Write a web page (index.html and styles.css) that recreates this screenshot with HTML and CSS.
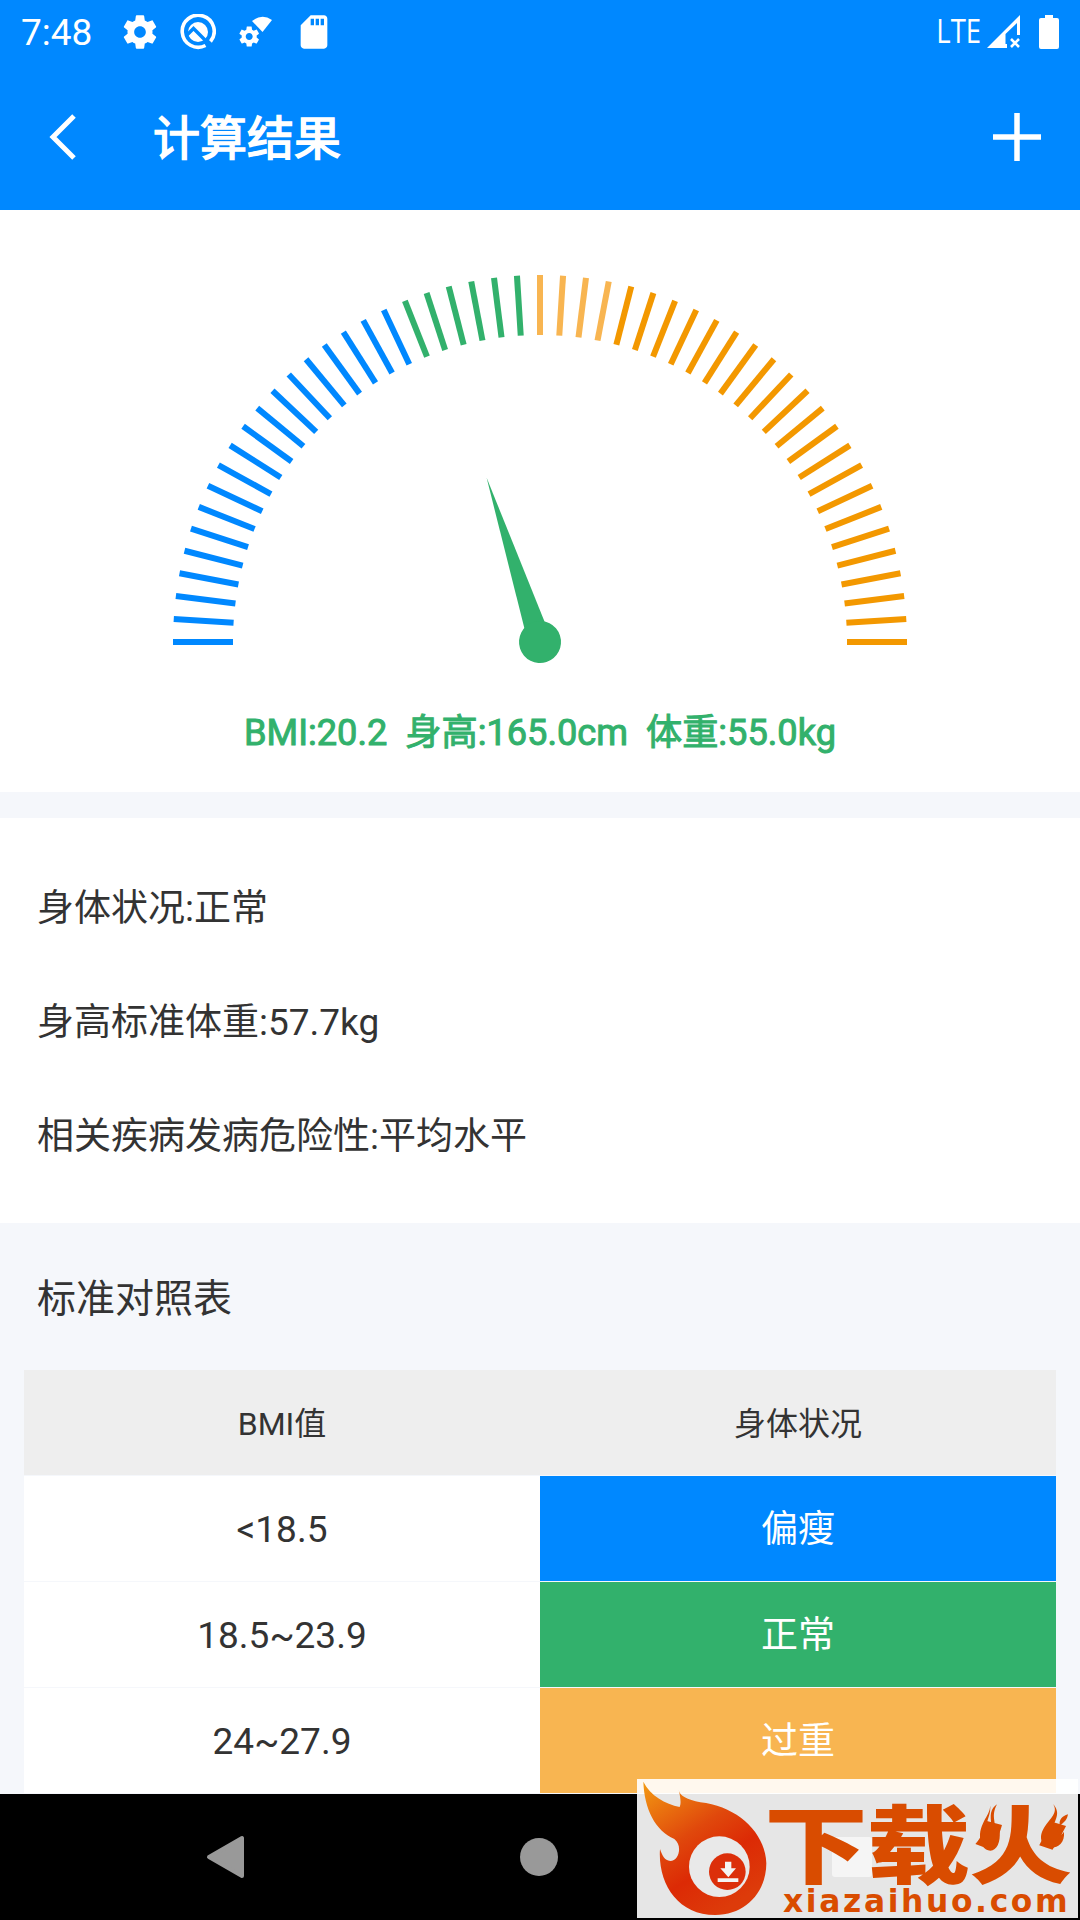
FILE: index.html
```
<!DOCTYPE html>
<html lang="zh-CN">
<head>
    <meta charset="UTF-8">
    <meta name="viewport" content="width=device-width, initial-scale=1.0">
    <title>计算结果</title>
    <link rel="stylesheet" href="styles.css">
</head>
<body>
    <header>
        <div class="status-bar">
            <span class="clock">7:48</span>
            <svg class="icon-gear" width="40" height="40" viewBox="0 0 24 24" fill="#fff"><path d="M19.43 12.98c.04-.32.07-.64.07-.98s-.03-.66-.07-.98l2.11-1.65c.19-.15.24-.42.12-.64l-2-3.46c-.12-.22-.39-.3-.61-.22l-2.49 1c-.52-.4-1.08-.73-1.69-.98l-.38-2.65C14.46 2.18 14.25 2 14 2h-4c-.25 0-.46.18-.49.42l-.38 2.65c-.61.25-1.17.59-1.69.98l-2.49-1c-.23-.09-.49 0-.61.22l-2 3.46c-.13.22-.07.49.12.64l2.11 1.65c-.04.32-.07.65-.07.98s.03.66.07.98l-2.11 1.65c-.19.15-.24.42-.12.64l2 3.46c.12.22.39.3.61.22l2.49-1c.52.4 1.08.73 1.69.98l.38 2.65c.03.24.24.42.49.42h4c.25 0 .46-.18.49-.42l.38-2.65c.61-.25 1.17-.59 1.69-.98l2.49 1c.23.09.49 0 .61-.22l2-3.46c.12-.22.07-.49-.12-.64l-2.11-1.65zM12 15.5c-1.93 0-3.5-1.57-3.5-3.5s1.57-3.5 3.5-3.5 3.5 1.57 3.5 3.5-1.57 3.5-3.5 3.5z"/></svg>
            <svg class="icon-q" width="36" height="36" viewBox="0 0 36 36">
                <path d="M25.5 31.5 A16 16 0 1 1 30.5 27.5" fill="none" stroke="#fff" stroke-width="3.6"/>
                <circle cx="18" cy="18" r="10" fill="#fff"/>
                <path d="M6 22 L13.5 14.5 L29.5 30.5" fill="none" stroke="#0088ff" stroke-width="3.4"/>
            </svg>
            <svg class="icon-wifi" width="34" height="34" viewBox="0 0 34 34" fill="#fff">
                <path d="M13 6 Q23 -2 33 5 L23.5 17 Z"/>
                <path transform="translate(-1.8 9.6)" d="M19.43 12.98c.04-.32.07-.64.07-.98s-.03-.66-.07-.98l2.11-1.65c.19-.15.24-.42.12-.64l-2-3.46c-.12-.22-.39-.3-.61-.22l-2.49 1c-.52-.4-1.08-.73-1.69-.98l-.38-2.65C14.46 2.18 14.25 2 14 2h-4c-.25 0-.46.18-.49.42l-.38 2.65c-.61.25-1.17.59-1.69.98l-2.49-1c-.23-.09-.49 0-.61.22l-2 3.46c-.13.22-.07.49.12.64l2.11 1.65c-.04.32-.07.65-.07.98s.03.66.07.98l-2.11 1.65c-.19.15-.24.42-.12.64l2 3.46c.12.22.39.3.61.22l2.49-1c.52.4 1.08.73 1.69.98l.38 2.65c.03.24.24.42.49.42h4c.25 0 .46-.18.49-.42l.38-2.65c.61-.25 1.17-.59 1.69-.98l2.49 1c.23.09.49 0 .61-.22l2-3.46c.12-.22.07-.49-.12-.64l-2.11-1.65zM12 15.5c-1.93 0-3.5-1.57-3.5-3.5s1.57-3.5 3.5-3.5 3.5 1.57 3.5 3.5-1.57 3.5-3.5 3.5z"/>
            </svg>
            <svg class="icon-sd" width="40" height="40" viewBox="0 0 24 24" fill="#fff"><path d="M18 2h-8L4.02 8 4 20c0 1.1.9 2 2 2h12c1.1 0 2-.9 2-2V4c0-1.1-.9-2-2-2zm-6 6h-2V4h2v4zm3 0h-2V4h2v4zm3 0h-2V4h2v4z"/></svg>
            <span class="network">LTE</span>
            <svg class="icon-signal" width="34" height="34" viewBox="0 0 34 34">
                <path fill="#fff" fill-rule="evenodd" d="M0 33 L33 0 V20 H30 V8 L18.5 19 V29 H20 V33 Z"/>
                <path d="M24 24 L32 32 M32 24 L24 32" stroke="#fff" stroke-width="2.6"/>
            </svg>
            <svg class="icon-battery" width="20" height="34" viewBox="0 0 20 34" fill="#fff"><path d="M6 0h8v3h4a2 2 0 0 1 2 2v27a2 2 0 0 1-2 2H2a2 2 0 0 1-2-2V5a2 2 0 0 1 2-2h4z"/></svg>
        </div>
        <div class="title-bar">
            <svg width="28" height="48" viewBox="0 0 28 48"><path d="M25 3 L4 24 L25 45" fill="none" stroke="#fff" stroke-width="5"/></svg>
            <h1>计算结果</h1>
            <svg width="48" height="48" viewBox="0 0 48 48"><path d="M24 0 V48 M0 24 H48" stroke="#fff" stroke-width="5.5"/></svg>
        </div>
    </header>

    <main>
        <section class="gauge">
            <svg width="740" height="400" viewBox="-370 -370 740 400">
                <g id="ticks"></g>
                <g class="needle" transform="rotate(-18)">
                    <polygon points="0,-173 -11.8,0 11.8,0"/>
                    <circle r="21"/>
                </g>
            </svg>
            <p class="result">BMI:20.2&nbsp; 身高:165.0cm&nbsp; 体重:55.0kg</p>
        </section>

        <section class="info">
            <p>身体状况:正常</p>
            <p>身高标准体重:57.7kg</p>
            <p>相关疾病发病危险性:平均水平</p>
        </section>

        <section class="standard">
            <h2>标准对照表</h2>
            <div class="table">
                <div class="row head"><span>BMI值</span><span>身体状况</span></div>
                <div class="row"><span>&lt;18.5</span><span class="thin">偏瘦</span></div>
                <div class="row"><span>18.5~23.9</span><span class="normal">正常</span></div>
                <div class="row"><span>24~27.9</span><span class="over">过重</span></div>
            </div>
        </section>
    </main>

    <nav>
        <svg width="42" height="44" viewBox="0 0 42 44"><path d="M4 22 L37 3 V41 Z" fill="#999" stroke="#999" stroke-width="4" stroke-linejoin="round"/></svg>
        <svg width="42" height="44" viewBox="0 0 42 44"><circle cx="21" cy="22" r="19" fill="#999"/></svg>
        <svg width="42" height="44" viewBox="0 0 42 44"><rect x="1" y="2" width="40" height="40" rx="3" fill="#999"/></svg>
    </nav>

    <svg class="watermark" viewBox="0 0 1323 417">
        <defs>
            <linearGradient id="flame" x1="0" y1="0" x2="0.6" y2="1">
                <stop offset="0" stop-color="#f39a12"/>
                <stop offset="0.45" stop-color="#e0480c"/>
                <stop offset="0.7" stop-color="#dc2a05"/>
                <stop offset="1" stop-color="#dd3b0a"/>
            </linearGradient>
        </defs>
        <path fill="url(#flame)" d="M19 8 C22 90 55 155 112 180 C138 200 125 246 100 246 C82 244 76 230 69 210 C62 310 120 408 235 408 C325 408 388 340 388 253 C385 160 300 82 190 70 C150 62 128 50 125 33 C132 60 132 75 128 84 C85 75 40 50 19 8 Z"/>
        <circle cx="247" cy="263" r="91" fill="#e9e9e9"/>
        <circle cx="271" cy="278" r="55" fill="#dc2f0a"/>
        <path fill="#f4f4f4" d="M264 248 h19 v20 h14 l-23 27 l-24 -27 h14 z M242 298 h62 v11 h-62 z"/>
        <g fill="#d94c00">
            <text class="brand" transform="translate(382 294) scale(1 0.82)" textLength="924">下载火</text>
            <path d="M1059 75 C1063 105 1035 120 1029 165 C1027 195 1042 215 1060 215 C1080 213 1091 190 1088 155 C1080 168 1074 168 1068 164 C1084 130 1058 118 1080 76 C1064 88 1059 100 1062 128 C1057 140 1052 145 1048 148 C1048 120 1064 105 1059 75 Z"/>
            <path d="M1248 75 C1265 100 1240 118 1222 145 C1200 180 1218 206 1242 206 C1265 206 1284 190 1281 158 C1275 168 1268 170 1262 165 C1262 130 1288 138 1293 106 C1275 112 1266 122 1268 138 C1258 146 1252 148 1248 149 C1250 125 1275 105 1248 75 Z"/>
            <text class="domain" x="438" y="399" textLength="854">xiazaihuo.com</text>
        </g>
    </svg>

    <script src="script.js"></script>
</body>
</html>
```
FILE: styles.css
```
* {
    box-sizing: border-box;
}

body {
    margin: 0;
    width: 1080px;
    height: 1920px;
    overflow: hidden;
    position: relative;
    background-color: #f5f7fb;
    color: #333;
    font-family: Roboto, "Noto Sans CJK SC", sans-serif;
    font-size: 37px;
}

h1, h2, p {
    margin: 0;
    font-weight: normal;
}

svg {
    display: block;
    flex-shrink: 0;
}

/* Header */
header {
    height: 210px;
    background-color: #0088ff;
    color: white;
}

.status-bar {
    display: flex;
    align-items: center;
    height: 63px;
    padding: 0 21px;
}

.clock {
    width: 99px;
    padding-top: 2px;
    font-size: 37px;
}

.icon-q {
    margin-left: 20px;
}

.icon-wifi {
    margin-left: 23px;
}

.icon-sd {
    margin-left: 21px;
}

.network {
    margin-left: auto;
    padding-bottom: 2px;
    font-family: "Open Sans", sans-serif;
    font-size: 32px;
    transform: scaleX(0.86);
    transform-origin: right;
}

.icon-signal {
    margin-left: 6px;
}

.icon-battery {
    margin-left: 18px;
}

.title-bar {
    display: flex;
    align-items: center;
    height: 147px;
    padding: 0 39px 0 49px;
}

.title-bar h1 {
    flex: 1;
    margin-left: 76px;
    padding-bottom: 4px;
    font-size: 47px;
    -webkit-text-stroke: 1.5px white;
}

/* Gauge */
.gauge {
    display: flex;
    flex-direction: column;
    align-items: center;
    height: 582px;
    padding-top: 62px;
    background-color: white;
}

.tick {
    stroke-width: 6;
}

.needle {
    fill: #32b16c;
}

.result {
    margin-top: 34px;
    line-height: 54px;
    font-size: 36.2px;
    color: #32b16c;
    white-space: nowrap;
    -webkit-text-stroke: 1px #32b16c;
}

/* Body info */
.info {
    height: 405px;
    margin-top: 26px;
    padding: 34px 37px 0;
    background-color: white;
}

.info p {
    height: 114px;
    line-height: 114px;
}

/* Standard table */
.standard {
    height: 571px;
    padding: 0 24px;
}

.standard h2 {
    height: 147px;
    padding-left: 13px;
    line-height: 153px;
    font-size: 39px;
}

.row {
    display: grid;
    grid-template-columns: 1fr 1fr;
    height: 106px;
    border-bottom: 1px solid #f5f7fb;
    background-color: white;
    line-height: 108px;
    text-align: center;
}

.row span {
    height: 105px;
}

.head {
    background-color: #eee;
    font-size: 32px;
}

.thin, .normal, .over {
    color: white;
}

.thin {
    background-color: #0088ff;
}

.normal {
    background-color: #32b16c;
}

.over {
    background-color: #f8b551;
}

/* Navigation bar */
nav {
    display: flex;
    align-items: center;
    justify-content: space-between;
    height: 126px;
    padding: 0 207px 0 205px;
    background-color: black;
}

/* Watermark over the bottom right corner */
.watermark {
    position: absolute;
    left: 637px;
    top: 1779px;
    width: 441px;
    height: 139px;
    background-color: rgba(255, 255, 255, 0.9);
}

.brand {
    font-family: "Noto Sans CJK SC", sans-serif;
    font-size: 310px;
    font-weight: 900;
}

.domain {
    font-family: "DejaVu Sans", sans-serif;
    font-size: 94px;
    font-weight: bold;
}
```
FILE: script.js
```
const ticks = document.getElementById('ticks');
const total = 50;

function tickColor(i) {
    if (i < 19) return '#0088ff';
    if (i < 25) return '#32b16c';
    if (i < 29) return '#f8b551';
    return '#f39800';
}

for (let i = 0; i <= total; i++) {
    const line = document.createElementNS('http://www.w3.org/2000/svg', 'line');
    line.setAttribute('class', 'tick');
    line.setAttribute('x1', -367);
    line.setAttribute('x2', -307);
    line.setAttribute('stroke', tickColor(i));
    line.setAttribute('transform', `rotate(${i * 180 / total})`);
    ticks.appendChild(line);
}
```
